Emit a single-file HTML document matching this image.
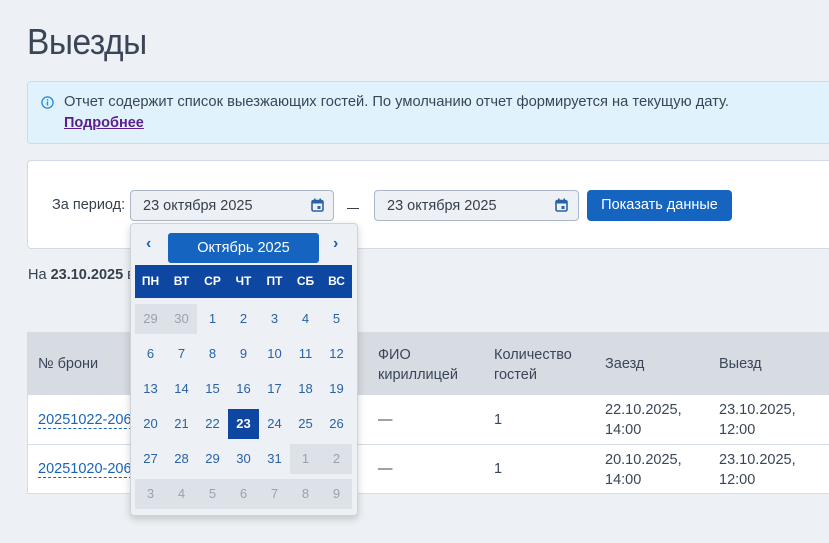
<!DOCTYPE html>
<html><head><meta charset="utf-8"><style>
*{box-sizing:border-box;margin:0;padding:0}
body{width:829px;height:543px;overflow:hidden;background:#edf0f4;font-family:"Liberation Sans","DejaVu Sans",sans-serif;color:#36404d;position:relative;font-size:14px}
.a{position:absolute}
h1{position:absolute;left:27px;top:21px;font-size:36px;font-weight:normal;color:#3a4658;letter-spacing:-0.5px;transform:scaleX(0.93);transform-origin:left}
.info{left:27px;top:81px;width:820px;height:63px;background:#e0f3fc;border:1px solid #b9e2f5;border-radius:4px}
.card{left:27px;top:160px;width:820px;height:89px;background:#fff;border:1px solid #d3dae3;border-radius:4px}
.inp{height:31px;background:#edf0f4;border:1px solid #a9b7c8;border-radius:4px;font-size:14.5px;line-height:30px;padding-left:12px;color:#36404d}
.btn{left:587px;top:190px;width:145px;height:31px;background:#1565c0;border-radius:4px;color:#fff;font-size:14.5px;line-height:31px;text-align:center}
.tbl{left:27px;top:332px;width:820px;height:162px;background:#fff;border:1px solid #d6dce4}
.th{top:332px;height:63px;left:27px;width:820px;background:#d7dbe2}
.cell{font-size:14.5px;line-height:20px;color:#3a4658}
.lnk{color:#1a63b8;border-bottom:1px dashed #1a63b8}
.cal{left:130px;top:223px;width:228px;height:293px;background:#edf0f4;border:1px solid #cdd3db;border-radius:4px;box-shadow:0 3px 8px rgba(0,0,0,.18)}
.d{position:absolute;width:31px;height:30px;line-height:30px;text-align:center;font-size:13px;color:#2a62a6}
.g{background:#dde1e8;color:#9aa3ad}
.dw{position:absolute;width:31px;text-align:center;color:#fff;font-size:12px;font-weight:bold;top:274px}
</style></head><body>
<h1>Выезды</h1>
<div class="a info"></div>
<svg class="a" style="left:41px;top:96px" width="13" height="13" viewBox="0 0 13 13"><circle cx="6.5" cy="6.5" r="5.6" fill="none" stroke="#1e88e5" stroke-width="1.3"/><rect x="5.8" y="5.5" width="1.4" height="4" fill="#1e88e5"/><rect x="5.8" y="3.2" width="1.4" height="1.4" fill="#1e88e5"/></svg>
<div class="a" style="left:64px;top:94px;font-size:14.7px;color:#3a4658">Отчет содержит список выезжающих гостей. По умолчанию отчет формируется на текущую дату.</div>
<div class="a" style="left:64px;top:115px;font-size:14.5px;font-weight:bold;color:#5a1f8a;text-decoration:underline">Подробнее</div>
<div class="a card"></div>
<div class="a" style="left:52px;top:197px;font-size:14.5px">За период:</div>
<div class="a inp" style="left:130px;top:190px;width:204px">23 октября 2025</div>
<svg class="a" style="left:311px;top:198px" width="13" height="14" viewBox="0 0 13 14"><rect x="1" y="2.5" width="11" height="10.5" rx="1.5" fill="none" stroke="#2a62a6" stroke-width="1.6"/><rect x="1" y="2.5" width="11" height="3" fill="#2a62a6"/><rect x="3" y="0.5" width="1.6" height="3" fill="#2a62a6"/><rect x="8.4" y="0.5" width="1.6" height="3" fill="#2a62a6"/><rect x="6.5" y="8" width="3" height="3" fill="#2a62a6"/></svg>
<div class="a" style="left:347px;top:208px;width:12px;height:1px;background:#36404d"></div>
<div class="a inp" style="left:374px;top:190px;width:205px">23 октября 2025</div>
<svg class="a" style="left:555px;top:198px" width="13" height="14" viewBox="0 0 13 14"><rect x="1" y="2.5" width="11" height="10.5" rx="1.5" fill="none" stroke="#2a62a6" stroke-width="1.6"/><rect x="1" y="2.5" width="11" height="3" fill="#2a62a6"/><rect x="3" y="0.5" width="1.6" height="3" fill="#2a62a6"/><rect x="8.4" y="0.5" width="1.6" height="3" fill="#2a62a6"/><rect x="6.5" y="8" width="3" height="3" fill="#2a62a6"/></svg>
<div class="a btn">Показать данные</div>
<div class="a" style="left:28px;top:267px;font-size:14.5px">На <b>23.10.2025</b> в</div>
<div class="a tbl"></div>
<div class="a th"></div>
<div class="a" style="left:27px;top:444px;width:820px;height:1px;background:#d6dce4"></div>
<div class="a cell" style="left:38px;top:354px">№ брони</div>
<div class="a cell" style="left:378px;top:345px">ФИО<br>кириллицей</div>
<div class="a cell" style="left:494px;top:345px">Количество<br>гостей</div>
<div class="a cell" style="left:605px;top:354px">Заезд</div>
<div class="a cell" style="left:719px;top:354px">Выезд</div>
<div class="a cell" style="left:38px;top:410px"><span class="lnk">20251022-206</span></div>
<div class="a cell" style="left:378px;top:410px">—</div>
<div class="a cell" style="left:494px;top:410px">1</div>
<div class="a cell" style="left:605px;top:400px">22.10.2025,<br>14:00</div>
<div class="a cell" style="left:719px;top:400px">23.10.2025,<br>12:00</div>
<div class="a cell" style="left:38px;top:459px"><span class="lnk">20251020-206</span></div>
<div class="a cell" style="left:378px;top:459px">—</div>
<div class="a cell" style="left:494px;top:459px">1</div>
<div class="a cell" style="left:605px;top:450px">20.10.2025,<br>14:00</div>
<div class="a cell" style="left:719px;top:450px">23.10.2025,<br>12:00</div>
<div class="a cal"></div>
<div class="a" style="left:146px;top:235px;color:#1a63b8;font-size:16px;font-weight:bold">‹</div>
<div class="a" style="left:168px;top:233px;width:151px;height:30px;background:#1565c0;border-radius:3px;color:#fff;text-align:center;line-height:30px;font-size:14.5px">Октябрь 2025</div>
<div class="a" style="left:333px;top:235px;color:#1a63b8;font-size:16px;font-weight:bold">›</div>
<div class="a" style="left:135px;top:265px;width:217px;height:33px;background:#0d47a1"></div>
<div class="dw" style="left:135px">ПН</div><div class="dw" style="left:166px">ВТ</div><div class="dw" style="left:197px">СР</div><div class="dw" style="left:228px">ЧТ</div><div class="dw" style="left:259px">ПТ</div><div class="dw" style="left:290px">СБ</div><div class="dw" style="left:321px">ВС</div>
<div class="a" style="left:135px;top:479px;width:217px;height:30px;background:#dde1e8"></div>
<div id="days"></div>
<script>
var rows=[[29,30,1,2,3,4,5],[6,7,8,9,10,11,12],[13,14,15,16,17,18,19],[20,21,22,23,24,25,26],[27,28,29,30,31,1,2],[3,4,5,6,7,8,9]];
var h='';rows.forEach(function(r,i){r.forEach(function(d,j){var g=(i==0&&j<2)||(i==4&&j>4)||i==5;var s=(i==3&&j==3);
h+='<div class="d'+(g?' g':'')+'" style="left:'+(135+j*31)+'px;top:'+(304+i*35)+'px;'+(s?'background:#0d47a1;color:#fff;font-weight:bold':'')+(i==5?'background:none':'')+'">'+d+'</div>';});});
document.getElementById('days').innerHTML=h;
</script>
</body></html>
